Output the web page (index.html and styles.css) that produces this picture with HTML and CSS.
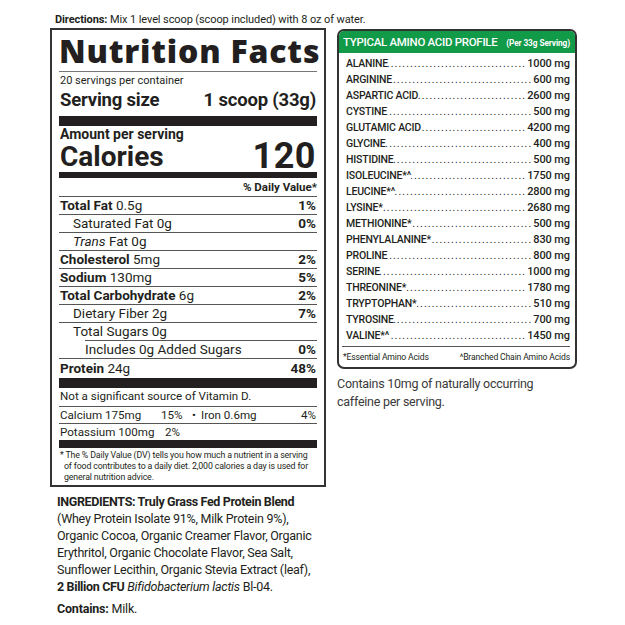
FILE: index.html
```html
<!DOCTYPE html>
<html>
<head>
<meta charset="utf-8">
<link rel="stylesheet" href="styles.css">
</head>
<body>
<div class="page">
  <p class="directions"><b>Directions:</b> Mix 1 level scoop (scoop included) with 8 oz of water.</p>
  <div class="columns">
    <div class="left">
      <div class="nf">
        <h1 class="nf-title">Nutrition Facts</h1>
        <div class="servings">20 servings per container</div>
        <div class="serving-size"><span>Serving size</span><span>1 scoop (33g)</span></div>
        <div class="bar bar-10"></div>
        <div class="amount">Amount per serving</div>
        <div class="calories"><span class="cal-label">Calories</span><span class="cal-value">120</span></div>
        <div class="bar bar-6"></div>
        <div class="dv-head">% Daily Value*</div>
        <div class="row"><span><b>Total Fat</b> 0.5g</span><b>1%</b></div>
        <div class="row indent1"><span>Saturated Fat 0g</span><b>0%</b></div>
        <div class="row indent1"><span><i>Trans</i> Fat 0g</span></div>
        <div class="row"><span><b>Cholesterol</b> 5mg</span><b>2%</b></div>
        <div class="row"><span><b>Sodium</b> 130mg</span><b>5%</b></div>
        <div class="row"><span><b>Total Carbohydrate</b> 6g</span><b>2%</b></div>
        <div class="row indent1"><span>Dietary Fiber 2g</span><b>7%</b></div>
        <div class="row indent1"><span>Total Sugars 0g</span></div>
        <div class="row indent2 line-indent"><span>Includes 0g Added Sugars</span><b>0%</b></div>
        <div class="row protein"><span><b>Protein</b> 24g</span><b>48%</b></div>
        <div class="bar bar-10"></div>
        <div class="mrow">Not a significant source of Vitamin D.</div>
        <div class="mrow line"><span class="m1">Calcium 175mg</span><span class="m2">15%</span><span class="m3">•</span><span class="m4">Iron 0.6mg</span><span class="m5">4%</span></div>
        <div class="mrow line"><span class="m1 k">Potassium 100mg</span><span class="m2">2%</span></div>
        <div class="bar bar-8"></div>
        <p class="footnote">* The % Daily Value (DV) tells you how much a nutrient in a serving<br>of food contributes to a daily diet. 2,000 calories a day is used for<br>general nutrition advice.</p>
      </div>
      <p class="ingredients"><b>INGREDIENTS: Truly Grass Fed Protein Blend</b><br>(Whey Protein Isolate 91%, Milk Protein 9%),<br>Organic Cocoa, Organic Creamer Flavor, Organic<br>Erythritol, Organic Chocolate Flavor, Sea Salt,<br>Sunflower Lecithin, Organic Stevia Extract (leaf),<br><b>2 Billion CFU</b> <i>Bifidobacterium lactis</i> Bl-04.</p>
      <p class="contains"><b>Contains:</b> Milk.</p>
    </div>
    <div class="right">
      <div class="amino">
        <div class="amino-head"><span class="ah-title">TYPICAL AMINO ACID PROFILE</span><span class="ah-sub">(Per 33g Serving)</span></div>
        <div class="amino-list">
          <div class="arow"><span class="an">ALANINE</span><span class="dots"></span><span class="av">1000 mg</span></div>
          <div class="arow"><span class="an">ARGININE</span><span class="dots"></span><span class="av">600 mg</span></div>
          <div class="arow"><span class="an">ASPARTIC ACID</span><span class="dots"></span><span class="av">2600 mg</span></div>
          <div class="arow"><span class="an">CYSTINE</span><span class="dots"></span><span class="av">500 mg</span></div>
          <div class="arow"><span class="an">GLUTAMIC ACID</span><span class="dots"></span><span class="av">4200 mg</span></div>
          <div class="arow"><span class="an">GLYCINE</span><span class="dots"></span><span class="av">400 mg</span></div>
          <div class="arow"><span class="an">HISTIDINE</span><span class="dots"></span><span class="av">500 mg</span></div>
          <div class="arow"><span class="an">ISOLEUCINE*^</span><span class="dots"></span><span class="av">1750 mg</span></div>
          <div class="arow"><span class="an">LEUCINE*^</span><span class="dots"></span><span class="av">2800 mg</span></div>
          <div class="arow"><span class="an">LYSINE*</span><span class="dots"></span><span class="av">2680 mg</span></div>
          <div class="arow"><span class="an">METHIONINE*</span><span class="dots"></span><span class="av">500 mg</span></div>
          <div class="arow"><span class="an">PHENYLALANINE*</span><span class="dots"></span><span class="av">830 mg</span></div>
          <div class="arow"><span class="an">PROLINE</span><span class="dots"></span><span class="av">800 mg</span></div>
          <div class="arow"><span class="an">SERINE</span><span class="dots"></span><span class="av">1000 mg</span></div>
          <div class="arow"><span class="an">THREONINE*</span><span class="dots"></span><span class="av">1780 mg</span></div>
          <div class="arow"><span class="an">TRYPTOPHAN*</span><span class="dots"></span><span class="av">510 mg</span></div>
          <div class="arow"><span class="an">TYROSINE</span><span class="dots"></span><span class="av">700 mg</span></div>
          <div class="arow"><span class="an">VALINE*^</span><span class="dots"></span><span class="av">1450 mg</span></div>
        </div>
        <div class="amino-foot"><span>*Essential Amino Acids</span><span>^Branched Chain Amino Acids</span></div>
      </div>
      <p class="caffeine">Contains 10mg of naturally occurring<br>caffeine per serving.</p>
    </div>
  </div>
</div>
</body>
</html>
```
FILE: styles.css
```css
* { box-sizing: border-box; }
html, body { margin: 0; padding: 0; background: #fff; }
body { font-family: Roboto, "Liberation Sans", sans-serif; color: #231f20; }
p { margin: 0; }
.page { padding: 12px 0 0 50px; }
.directions { padding-left: 5px; font-size: 11px; line-height: 16px; height: 16px; letter-spacing: -0.1px; white-space: nowrap; }
.directions b { font-weight: 700; }
.columns { display: flex; gap: 11px; align-items: flex-start; }
.left { width: 276px; }
.right { width: 240px; padding-top: 1px; }

.nf { border: 2px solid #333; padding: 0 7px 0 7px; }
.nf-title { margin: 0; font-family: "Open Sans", Roboto, sans-serif; font-size: 32px; font-weight: 800; line-height: 41px; height: 42px; letter-spacing: 0.8px; border-bottom: 1.5px solid #777; white-space: nowrap; }
.servings { font-size: 11px; height: 17px; line-height: 18px; padding-left: 1px; }
.serving-size { display: flex; justify-content: space-between; font-size: 18.5px; font-weight: 700; height: 27px; line-height: 22px; padding: 0 1px; letter-spacing: -0.2px; }
.bar { background: #231f20; }
.bar-10 { height: 10px; }
.bar-8 { height: 8px; }
.bar-6 { height: 6px; }
.amount { font-size: 14px; font-weight: 700; height: 14px; line-height: 14px; padding-left: 1px; margin-top: 1px; }
.calories { display: flex; justify-content: space-between; align-items: flex-end; height: 31px; padding: 0 1px; }
.cal-label { font-size: 28px; font-weight: 700; line-height: 30px; }
.cal-value { font-size: 36px; font-weight: 700; line-height: 31px; letter-spacing: 0.5px; }
.dv-head { font-size: 11.5px; font-weight: 700; text-align: right; height: 18px; line-height: 19px; }
.row { display: flex; justify-content: space-between; font-size: 13.5px; height: 18px; line-height: 17px; border-top: 1px solid #555; padding: 0 1px; }
.row b { font-weight: 700; }
.indent1 { padding-left: 14px; }
.indent2 { padding-left: 26px; }
.line-indent { border-top: none; background: linear-gradient(#555, #555) no-repeat 26px 0 / calc(100% - 26px) 1px; padding-top: 1px; }
.protein { height: 20px; line-height: 19px; }
.mrow { display: flex; font-size: 11.6px; height: 18px; line-height: 17px; padding: 0 1px; }
.mrow.line { border-top: 1px solid #555; height: 17px; }
.m1 { width: 101px; }
.m1.k { width: 105px; }
.m2 { width: 31px; }
.m3 { width: 9px; }
.m4 { flex: 1; }
.footnote { font-size: 8.8px; line-height: 11px; padding: 2px 0 2px 1px; padding-left: 5px; text-indent: -4px; letter-spacing: -0.15px; white-space: nowrap; }

.ingredients { margin-top: 6px; padding-left: 7px; font-size: 12.5px; line-height: 17px; letter-spacing: -0.25px; white-space: nowrap; }
.ingredients b { font-weight: 700; letter-spacing: -0.35px; }
.contains { margin-top: 5px; padding-left: 7px; font-size: 12.5px; line-height: 17px; letter-spacing: -0.2px; }
.contains b { font-weight: 700; }

.amino { border: 2px solid #333; border-radius: 7px; overflow: hidden; }
.amino-head { background: #119a48; color: #fff; display: flex; justify-content: space-between; align-items: baseline; height: 22px; padding: 4px 5px 0 4px; white-space: nowrap; }
.ah-title { font-size: 11.5px; font-weight: 500; letter-spacing: -0.3px; }
.ah-sub { font-size: 8.3px; font-weight: 700; letter-spacing: -0.1px; }
.amino-list { padding: 3px 5px 0 7px; }
.arow { display: flex; height: 16px; line-height: 16px; font-size: 10.5px; font-weight: 500; white-space: nowrap; }
.an { letter-spacing: -0.2px; }
.av { font-size: 11px; letter-spacing: -0.1px; }
.dots { flex: 1; overflow: hidden; font-weight: 400; letter-spacing: 1.1px; padding: 0 1px; text-align: right; direction: rtl; }
.dots::after { content: "........................................................................................................................"; }
.amino-foot { margin: 2px 5px 0 3px; border-top: 1.5px solid #555; display: flex; justify-content: space-between; font-size: 8.6px; height: 21px; line-height: 20px; padding-left: 1px; letter-spacing: -0.15px; }
.caffeine { margin-top: 6px; font-size: 12.5px; line-height: 18px; color: #3a3a3a; letter-spacing: -0.25px; }
```
